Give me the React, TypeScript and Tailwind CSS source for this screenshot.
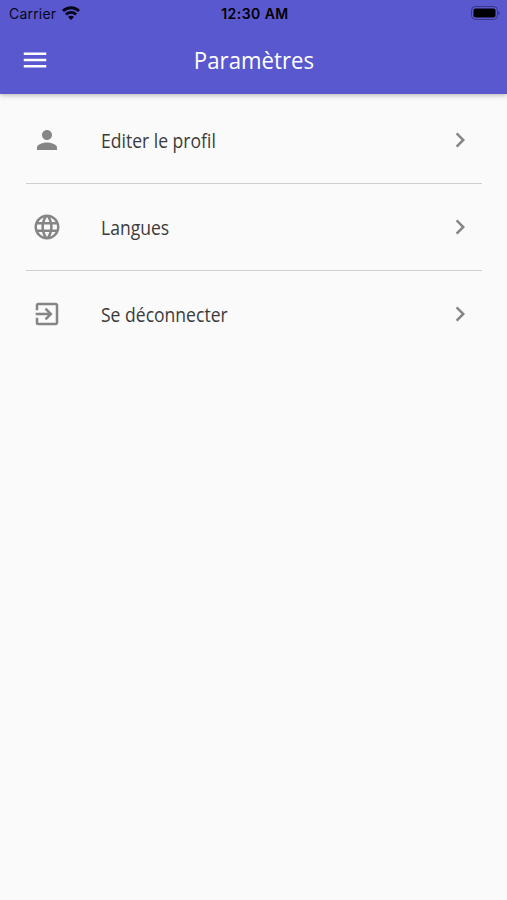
import React from 'react';
import { MdMenu, MdPerson, MdLanguage, MdExitToApp, MdChevronRight } from 'react-icons/md';

const items = [
  { label: 'Editer le profil', icon: MdPerson },
  { label: 'Langues', icon: MdLanguage },
  { label: 'Se déconnecter', icon: MdExitToApp },
];

function StatusBar() {
  return (
    <div className="grid h-[27px] grid-cols-3 items-center pl-[9px] pr-[6px] font-['Inter',sans-serif] text-[14px] text-[#07061a]">
      <div className="flex items-center gap-[6px]">
        <span className="tracking-[0.2px]">Carrier</span>
        <svg width="18" height="14" viewBox="0 0 18 14" className="-mt-[2px]" fill="none" stroke="currentColor" strokeWidth="2.8">
          <path d="M1 5a11.5 11.5 0 0 1 16 0" />
          <path d="M3.9 8.5a7.4 7.4 0 0 1 10.2 0" />
          <path d="M9 14 6 10.9a4.2 4.2 0 0 1 6 0Z" fill="currentColor" stroke="none" />
        </svg>
      </div>
      <span className="text-center font-semibold tracking-[0.45px] text-black">12:30 AM</span>
      <div className="flex justify-end">
        <svg width="30" height="14" viewBox="0 0 30 14" className="-mt-px">
          <rect x="0.5" y="0.5" width="26" height="13" rx="4" fill="none" stroke="currentColor" opacity="0.4" />
          <rect x="2.5" y="2.5" width="22" height="9" rx="2" fill="black" />
          <path d="M27.5 5v4c1.6-.8 1.6-3.2 0-4Z" fill="currentColor" opacity="0.5" />
        </svg>
      </div>
    </div>
  );
}

export default function App() {
  return (
    <div className="min-h-[900px] bg-[#fafafa] font-['Open_Sans',sans-serif]">
      <header className="h-[94px] bg-[#5a58ce] shadow-[0_1px_5px_rgba(0,0,0,0.3)]">
        <StatusBar />
        <div className="grid h-[66px] grid-cols-[1fr_auto_1fr] items-center px-5 text-white">
          <MdMenu size={30} />
          <h1 className="scale-x-[0.925] text-[24px]">Paramètres</h1>
        </div>
      </header>
      <ul className="pl-[26px] pr-[25px] pt-[3px]">
        {items.map(({ label, icon: Icon }) => (
          <li key={label} className="flex h-[87px] items-center border-b border-[#d0d0d0] pl-[6px] pr-[7px] last:border-transparent">
            <Icon size={30} className="text-[#858585]" />
            <span className="ml-[39px] flex-1 origin-left scale-x-[0.9] pt-px text-[19.5px] text-[#3a3a3a]">{label}</span>
            <MdChevronRight size={30} className="text-[#858585]" />
          </li>
        ))}
      </ul>
    </div>
  );
}
